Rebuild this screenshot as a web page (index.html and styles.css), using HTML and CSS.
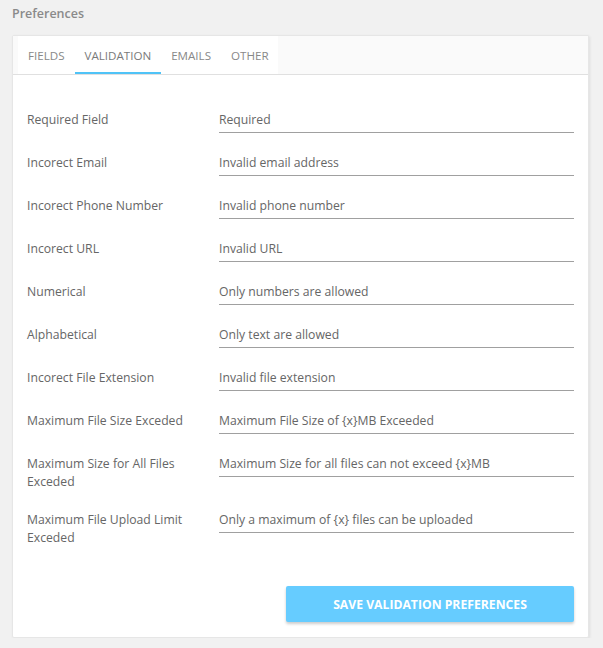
FILE: index.html
```html
<!DOCTYPE html>
<html lang="en">
<head>
    <meta charset="UTF-8">
    <title>Preferences</title>
    <link rel="stylesheet" href="styles.css">
</head>
<body>
    <div class="page">
        <div class="page-title">Preferences</div>
        <div class="card">
            <div class="tab-bar">
                <ul class="tabs">
                    <li class="tab">Fields</li>
                    <li class="tab active">Validation</li>
                    <li class="tab">Emails</li>
                    <li class="tab">Other</li>
                </ul>
            </div>
            <form class="form">
                <div class="row">
                    <label class="label">Required Field</label>
                    <input class="field" type="text" value="Required">
                </div>
                <div class="row">
                    <label class="label">Incorect Email</label>
                    <input class="field" type="text" value="Invalid email address">
                </div>
                <div class="row">
                    <label class="label">Incorect Phone Number</label>
                    <input class="field" type="text" value="Invalid phone number">
                </div>
                <div class="row">
                    <label class="label">Incorect URL</label>
                    <input class="field" type="text" value="Invalid URL">
                </div>
                <div class="row">
                    <label class="label">Numerical</label>
                    <input class="field" type="text" value="Only numbers are allowed">
                </div>
                <div class="row">
                    <label class="label">Alphabetical</label>
                    <input class="field" type="text" value="Only text are allowed">
                </div>
                <div class="row">
                    <label class="label">Incorect File Extension</label>
                    <input class="field" type="text" value="Invalid file extension">
                </div>
                <div class="row">
                    <label class="label">Maximum File Size Exceded</label>
                    <input class="field" type="text" value="Maximum File Size of {x}MB Exceeded">
                </div>
                <div class="row">
                    <label class="label">Maximum Size for All Files Exceded</label>
                    <input class="field" type="text" value="Maximum Size for all files can not exceed {x}MB">
                </div>
                <div class="row">
                    <label class="label">Maximum File Upload Limit Exceded</label>
                    <input class="field" type="text" value="Only a maximum of {x} files can be uploaded">
                </div>
                <div class="actions">
                    <button class="save-btn" type="button">Save Validation Preferences</button>
                </div>
            </form>
        </div>
    </div>
</body>
</html>
```
FILE: styles.css
```css
* {
    margin: 0;
    padding: 0;
    box-sizing: border-box;
    font-family: "Open Sans", sans-serif;
}

body {
    background-color: #f1f1f1;
}

.page {
    padding: 5px 14px 0 12px;
}

.page-title {
    font-size: 12.5px;
    font-weight: 600;
    color: #8a8a8a;
    line-height: 18px;
    margin-bottom: 12px;
}

.card {
    background-color: white;
    border: 1px solid #e6e6e6;
    border-radius: 2px;
    box-shadow: 1px 1px 3px rgba(0, 0, 0, 0.08);
}

.tab-bar {
    background-color: #fafafa;
    border-bottom: 1px solid #e0e0e0;
    padding-left: 5px;
    height: 39px;
}

.tabs {
    list-style: none;
    display: flex;
    background-color: white;
    width: 260px;
    height: 38px;
}

.tab {
    padding: 0 10px;
    font-size: 11.6px;
    text-transform: uppercase;
    color: #888;
    border-bottom: 2px solid transparent;
    height: 38px;
    line-height: 39px;
}

.tab.active {
    border-bottom-color: #4fc3f7;
    color: #7a7a7a;
}

.form {
    padding: 28px 14px 15px 14px;
}

.row {
    display: flex;
    align-items: flex-start;
    margin-bottom: 13px;
}

.label {
    width: 192px;
    flex-shrink: 0;
    padding-top: 8px;
    padding-right: 10px;
    font-size: 12.2px;
    line-height: 17.5px;
    color: #666;
}

.field {
    flex: 1;
    height: 30px;
    padding-top: 4px;
    border: none;
    border-bottom: 1px solid #a0a0a0;
    font-size: 12.2px;
    color: #666;
    outline: none;
    background: transparent;
}

.actions {
    display: flex;
    justify-content: flex-end;
    margin-top: 40px;
}

.save-btn {
    width: 288px;
    height: 36px;
    border: none;
    border-radius: 2px;
    background-color: #66ccff;
    color: white;
    font-size: 12.2px;
    font-weight: 700;
    text-transform: uppercase;
    box-shadow: 0 2px 3px rgba(0, 0, 0, 0.2);
    cursor: pointer;
}
```
